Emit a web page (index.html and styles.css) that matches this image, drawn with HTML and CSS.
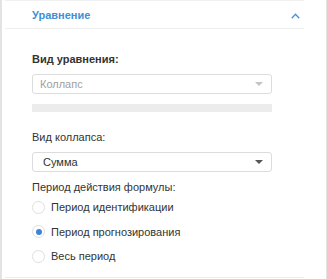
FILE: index.html
```html
<!DOCTYPE html>
<html>
<head>
<meta charset="utf-8">
<link rel="stylesheet" href="styles.css">
</head>
<body>
<div class="frame">
  <div class="panel">
    <div class="header">
      <span class="title">Уравнение</span>
      <svg class="chev" width="9" height="6" viewBox="0 0 9 6"><path d="M0.8 5.2 L4.5 1.3 L8.2 5.2" fill="none" stroke="#4a90d9" stroke-width="1.3"/></svg>
    </div>
    <div class="body">
      <div class="label bold">Вид уравнения:</div>
      <div class="select disabled first">
        <span>Коллапс</span>
        <span class="arrow light"></span>
      </div>
      <div class="bar"></div>
      <div class="label sub">Вид коллапса:</div>
      <div class="select">
        <span class="val">Сумма</span>
        <span class="arrow"></span>
      </div>
      <div class="label period">Период действия формулы:</div>
      <div class="radios">
        <div class="radio"><span class="dot"></span><span>Период идентификации</span></div>
        <div class="radio on"><span class="dot"></span><span>Период прогнозирования</span></div>
        <div class="radio"><span class="dot"></span><span>Весь период</span></div>
      </div>
    </div>
  </div>
</div>
</body>
</html>
```
FILE: styles.css
```css
html, body {
  margin: 0;
  padding: 0;
  background: #fff;
}
body {
  font-family: "Liberation Sans", Arial, sans-serif;
  font-size: 11px;
  color: #333;
  width: 327px;
  height: 279px;
  overflow: hidden;
}
.frame {
  box-sizing: border-box;
  width: 327px;
  height: 279px;
  border-left: 2px solid #e3e3e3;
  border-right: 1px solid #e3e3e3;
}
.panel {
  margin-left: 3px;
  width: 299px;
  border-top: 1px solid #f0f0f0;
  border-bottom: 1px solid #ececec;
  height: 278px;
  box-sizing: border-box;
  display: flex;
  flex-direction: column;
}
.header {
  height: 28px;
  box-sizing: border-box;
  border-bottom: 1px solid #eeeeee;
  display: flex;
  align-items: center;
  justify-content: space-between;
  padding: 0 4px 0 27px;
}
.title {
  color: #3d8fd8;
  font-weight: bold;
  font-size: 11px;
  margin-top: 1px;
}
.chev {
  margin-top: 2px;
}
.body {
  padding: 0 0 0 27px;
  display: flex;
  flex-direction: column;
}
.label {
  line-height: 14px;
}
.bold {
  font-weight: bold;
  margin-top: 23px;
}
.select {
  box-sizing: border-box;
  width: 240px;
  height: 20px;
  border: 1px solid #dcdcdc;
  border-radius: 3px;
  display: flex;
  align-items: center;
  justify-content: space-between;
  padding: 0 8px 0 7px;
  margin-top: 8px;
}
.select.disabled {
  color: #a0a0a0;
}
.select .val {
  padding-left: 3px;
  color: #333;
}
.arrow {
  width: 0;
  height: 0;
  border-left: 4px solid transparent;
  border-right: 4px solid transparent;
  border-top: 4px solid #555;
}
.arrow.light {
  border-top-color: #c4c4c4;
}
.bar {
  width: 240px;
  height: 8px;
  background: #ececec;
  margin-top: 10px;
}
.sub {
  margin-top: 18px;
}
.period {
  margin-top: 8px;
}
.radios {
  display: flex;
  flex-direction: column;
  margin-top: 6px;
  gap: 10.5px;
}
.radio {
  display: flex;
  align-items: center;
  height: 14px;
  gap: 6px;
}
.dot {
  box-sizing: border-box;
  width: 13px;
  height: 13px;
  border-radius: 50%;
  border: 1px solid #dedede;
  background: #fff;
  position: relative;
}
.radio.on .dot::after {
  content: "";
  position: absolute;
  left: 2.5px;
  top: 2.5px;
  width: 6px;
  height: 6px;
  border-radius: 50%;
  background: #3a86d4;
}
```
